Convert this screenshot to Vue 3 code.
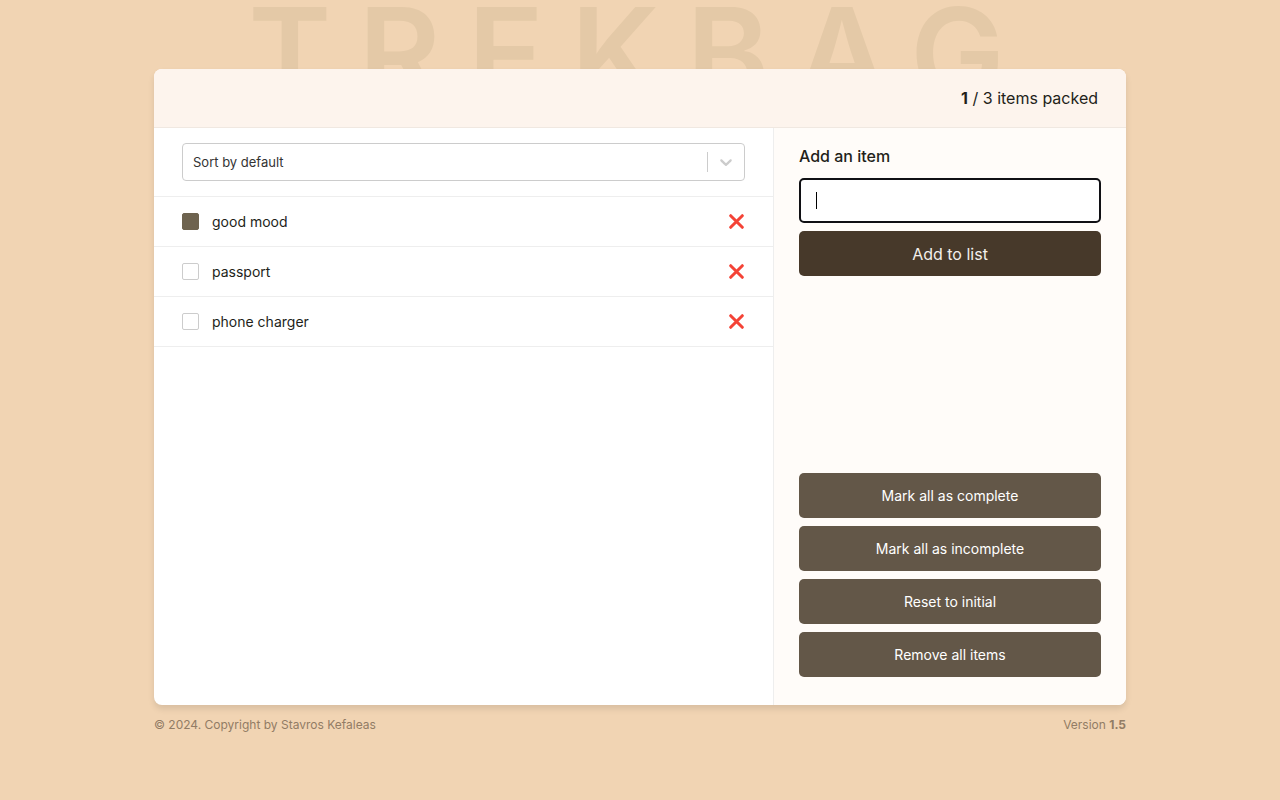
<script setup>
import { computed, onMounted, ref } from "vue";

const initialItems = [
  { id: 1, name: "good mood", packed: true },
  { id: 2, name: "passport", packed: false },
  { id: 3, name: "phone charger", packed: false },
];

const cloneInitial = () => initialItems.map((item) => ({ ...item }));

const items = ref(cloneInitial());
const sortBy = ref("default");
const newItem = ref("");
const itemInput = ref(null);

const packedCount = computed(() => items.value.filter((item) => item.packed).length);

const sortedItems = computed(() => {
  const list = [...items.value];
  if (sortBy.value === "packed") list.sort((a, b) => b.packed - a.packed);
  if (sortBy.value === "unpacked") list.sort((a, b) => a.packed - b.packed);
  return list;
});

function addItem() {
  const name = newItem.value.trim();
  if (name) items.value.push({ id: Date.now(), name, packed: false });
  newItem.value = "";
  itemInput.value.focus();
}

function removeItem(id) {
  items.value = items.value.filter((item) => item.id !== id);
}

function markAll(packed) {
  items.value.forEach((item) => (item.packed = packed));
}

const actions = [
  { label: "Mark all as complete", run: () => markAll(true) },
  { label: "Mark all as incomplete", run: () => markAll(false) },
  { label: "Reset to initial", run: () => (items.value = cloneInitial()) },
  { label: "Remove all items", run: () => (items.value = []) },
];

onMounted(() => itemInput.value.focus());
</script>

<template>
  <div class="page">
    <div class="shell">
      <h1 class="backdrop">TREKBAG</h1>

      <main class="card">
        <header class="header">
          <p><b>{{ packedCount }}</b> / {{ items.length }} items packed</p>
        </header>

        <section class="list-panel">
          <div class="sorting">
            <div class="select-box">
              <select v-model="sortBy" aria-label="Sort items">
                <option value="default">Sort by default</option>
                <option value="packed">Sort by packed</option>
                <option value="unpacked">Sort by unpacked</option>
              </select>
              <span class="indicator" aria-hidden="true">
                <svg viewBox="0 0 20 20" width="20" height="20">
                  <path
                    d="M4.516 7.548c0.436-0.446 1.043-0.481 1.576 0l3.908 3.747 3.908-3.747c0.533-0.481 1.141-0.446 1.574 0 0.436 0.445 0.408 1.197 0 1.615-0.406 0.418-4.695 4.502-4.695 4.502-0.217 0.223-0.502 0.335-0.787 0.335s-0.57-0.112-0.789-0.335c0 0-4.287-4.084-4.695-4.502s-0.436-1.17 0-1.615z"
                  />
                </svg>
              </span>
            </div>
          </div>

          <ul class="items">
            <li v-for="item in sortedItems" :key="item.id" class="item">
              <label>
                <input v-model="item.packed" type="checkbox" />
                {{ item.name }}
              </label>
              <button type="button" :aria-label="'Remove ' + item.name" @click="removeItem(item.id)">
                <svg viewBox="0 0 16 16" width="16" height="16" aria-hidden="true">
                  <path d="M1.7 1.7 13.3 13.3M13.3 1.7 1.7 13.3" />
                </svg>
              </button>
            </li>
          </ul>
        </section>

        <aside class="sidebar">
          <form @submit.prevent="addItem">
            <label for="new-item">Add an item</label>
            <input
              id="new-item"
              ref="itemInput"
              v-model="newItem"
              :class="{ empty: !newItem }"
              type="text"
              autocomplete="off"
            />
            <button class="btn primary">Add to list</button>
          </form>
          <div class="actions">
            <button v-for="action in actions" :key="action.label" type="button" class="btn" @click="action.run">
              {{ action.label }}
            </button>
          </div>
        </aside>
      </main>

      <footer class="footer">
        <small>© 2024. Copyright by Stavros Kefaleas</small>
        <p>Version <b>1.5</b></p>
      </footer>
    </div>
  </div>
</template>

<style>
body {
  margin: 0;
  background: #f1d4b3;
}
</style>

<style scoped>
* {
  box-sizing: border-box;
  margin: 0;
  padding: 0;
}

.page {
  display: flex;
  align-items: center;
  justify-content: center;
  min-height: 100vh;
  color: #231f1a;
  font-family: Inter, "Liberation Sans", sans-serif;
}

.shell {
  position: relative;
  width: 100%;
  max-width: 972px;
}

.backdrop {
  position: absolute;
  top: -91px;
  left: 0;
  width: 100%;
  font-size: 126px;
  font-weight: 600;
  line-height: 150px;
  letter-spacing: 27px;
  text-align: center;
  white-space: nowrap;
  color: #e4c9a7;
}

.card {
  position: relative;
  display: grid;
  grid-template-columns: 1fr 352px;
  grid-template-rows: auto 1fr;
  min-height: 636px;
  border-radius: 8px;
  background: #fff;
  box-shadow: 0 4px 6px rgba(0, 0, 0, 0.1);
  overflow: hidden;
}

.header {
  grid-column: 1 / -1;
  display: flex;
  align-items: center;
  justify-content: flex-end;
  height: 59px;
  padding: 0 28px;
  border-bottom: 1px solid #f0e8e1;
  background: #fdf4ed;
  font-size: 16px;
}

.list-panel {
  border-right: 1px solid #eee;
}

.sorting {
  padding: 15px 28px;
  border-bottom: 1px solid #eee;
}

.select-box {
  position: relative;
}

.select-box select {
  display: block;
  width: 100%;
  height: 38px;
  padding: 0 48px 0 10px;
  border: 1px solid #ccc;
  border-radius: 4px;
  appearance: none;
  background: #fff;
  color: #333;
  font-family: inherit;
  font-size: 13px;
}

.indicator {
  position: absolute;
  top: 9px;
  right: 1px;
  display: flex;
  padding: 0 8px;
  border-left: 1px solid #ccc;
  pointer-events: none;
}

.indicator path {
  fill: #ccc;
}

.items {
  list-style: none;
}

.item {
  display: flex;
  align-items: center;
  justify-content: space-between;
  height: 50px;
  padding: 0 28px;
  border-bottom: 1px solid #eee;
  font-size: 14px;
}

.item label {
  display: flex;
  align-items: center;
  gap: 13px;
}

.item input {
  width: 17px;
  height: 17px;
  border: 1px solid #ccc;
  border-radius: 2px;
  appearance: none;
  background: #fff;
}

.item input:checked {
  border-color: #6e634f;
  background: #6e634f;
}

.item button {
  display: flex;
  border: 0;
  background: none;
}

.item path {
  fill: none;
  stroke: #f44336;
  stroke-width: 3;
  stroke-linecap: round;
}

.sidebar {
  display: flex;
  flex-direction: column;
  justify-content: space-between;
  padding: 18px 25px 28px;
  background: #fffcf9;
}

.sidebar form,
.actions {
  display: flex;
  flex-direction: column;
  gap: 8px;
}

.sidebar label {
  margin-bottom: 4px;
  font-size: 16px;
  font-weight: 500;
  line-height: 20px;
}

.sidebar input {
  width: 100%;
  height: 45px;
  padding: 0 15px;
  border: 2px solid #101014;
  border-radius: 5px;
  outline: none;
  background-color: #fff;
  font-family: inherit;
  font-size: 14px;
}

/* Steady insertion mark while the focused field is empty */
.sidebar input.empty:focus {
  background-image: linear-gradient(#000, #000);
  background-position: 15px 12px;
  background-repeat: no-repeat;
  background-size: 1px 17px;
  caret-color: transparent;
}

.btn {
  height: 45px;
  border: 0;
  border-radius: 5px;
  background: #635748;
  color: #fff;
  font-family: inherit;
  font-size: 14px;
}

.btn.primary {
  background: #47392a;
  color: #f2efec;
  font-size: 16px;
}

.footer {
  display: flex;
  justify-content: space-between;
  margin-top: 14px;
  color: #927c65;
  font-size: 12px;
  line-height: 12px;
}

.footer small {
  font-size: 12px;
}
</style>
